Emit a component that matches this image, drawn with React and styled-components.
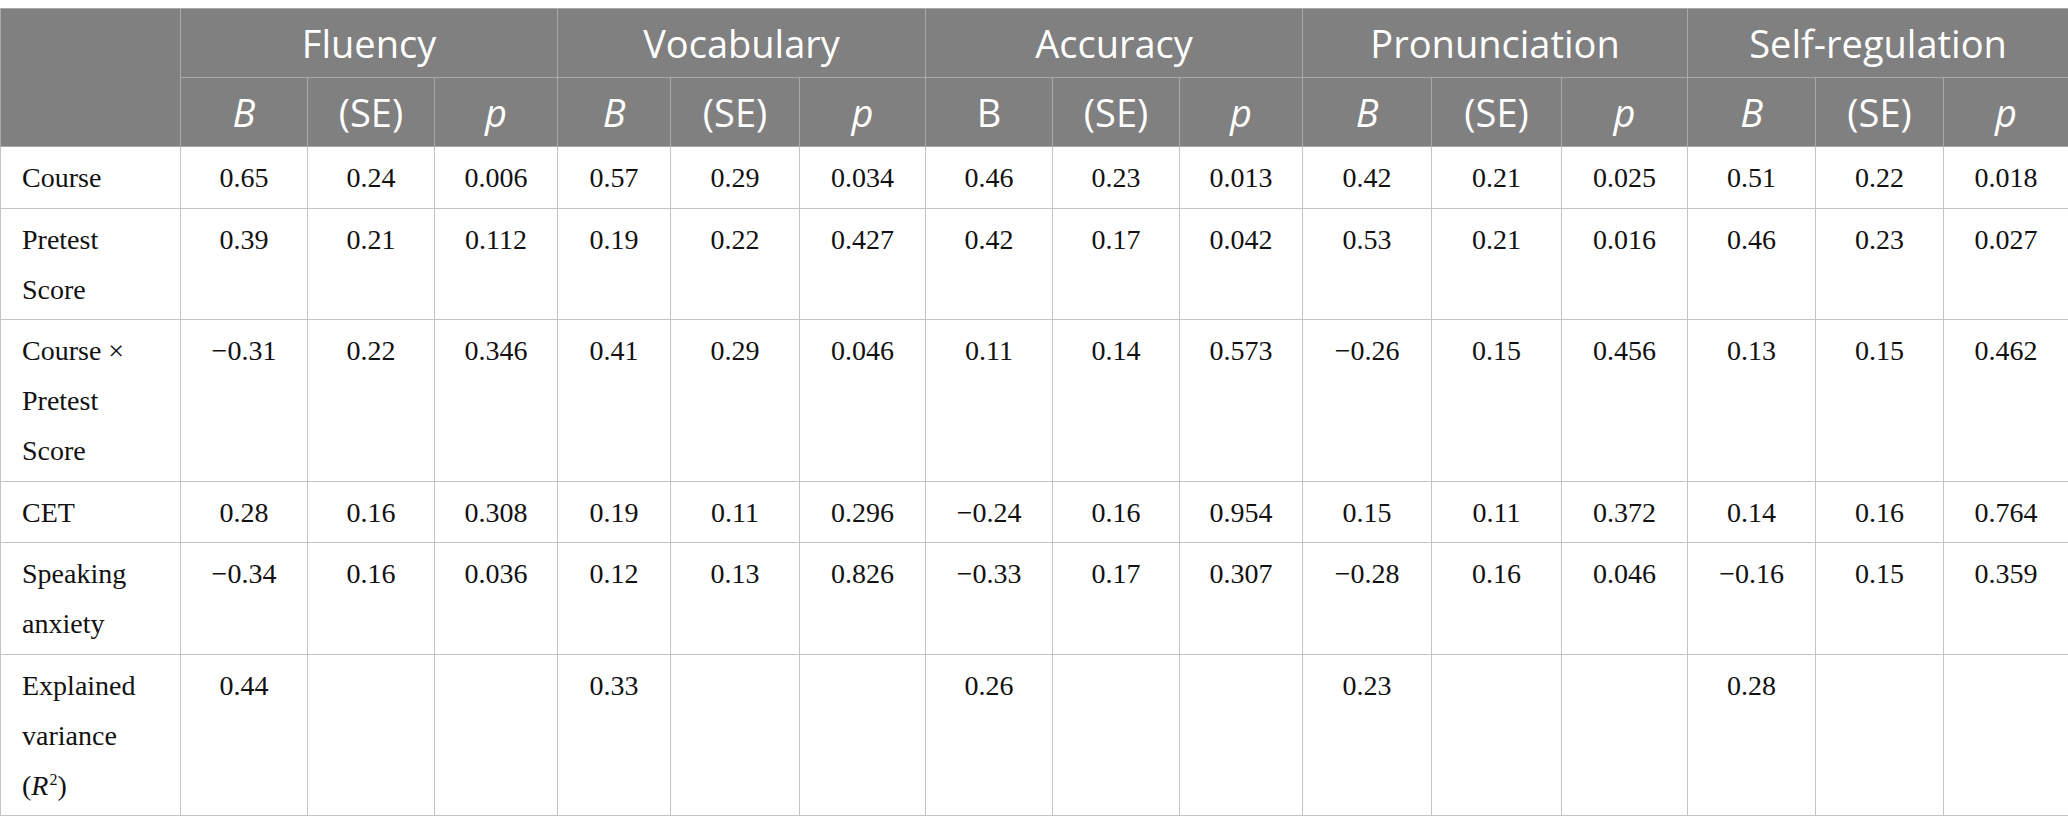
import React from 'react';
import styled, { createGlobalStyle } from 'styled-components';

const GlobalStyle = createGlobalStyle`
  html, body {
    margin: 0;
    padding: 0;
    background: #fff;
  }
`;

const Page = styled.div`
  padding-top: 8px;
  width: 2068px;
`;

const Table = styled.table`
  width: 2068px;
  table-layout: fixed;
  border-collapse: collapse;
  border-top: 1px solid #cfcfcf;
  border-bottom: 1px solid #bcbcbc;
`;

const HeadCell = styled.th`
  background: #7f807f;
  color: #fff;
  font-family: "Open Sans", "Liberation Sans", sans-serif;
  font-weight: 400;
  font-size: 38px;
  font-style: ${(p) => (p.$italic ? 'italic' : 'normal')};
  text-align: center;
  vertical-align: middle;
  height: 68px;
  padding: 0;
  border: 1px solid #a9a9a9;
`;

const Cell = styled.td`
  font-family: "Liberation Serif", "Times New Roman", serif;
  font-size: 28px;
  line-height: 50px;
  color: #111;
  text-align: ${(p) => (p.$label ? 'left' : 'center')};
  vertical-align: top;
  padding: 6px 21px 4.5px;
  border: 1px solid #c4c4c4;
  word-wrap: break-word;
`;

const Sup = styled.sup`
  font-size: 16px;
  line-height: 0;
  vertical-align: 10px;
  margin-left: 1px;
`;

const widths = [180, 127, 127, 123, 113, 129, 126, 127, 127, 123, 129, 130, 126, 128, 128, 125];

const groups = ['Fluency', 'Vocabulary', 'Accuracy', 'Pronunciation', 'Self-regulation'];

const rows = [
  { label: 'Course', vals: ['0.65', '0.24', '0.006', '0.57', '0.29', '0.034', '0.46', '0.23', '0.013', '0.42', '0.21', '0.025', '0.51', '0.22', '0.018'] },
  { label: 'Pretest Score', vals: ['0.39', '0.21', '0.112', '0.19', '0.22', '0.427', '0.42', '0.17', '0.042', '0.53', '0.21', '0.016', '0.46', '0.23', '0.027'] },
  { label: 'Course × Pretest Score', vals: ['−0.31', '0.22', '0.346', '0.41', '0.29', '0.046', '0.11', '0.14', '0.573', '−0.26', '0.15', '0.456', '0.13', '0.15', '0.462'] },
  { label: 'CET', vals: ['0.28', '0.16', '0.308', '0.19', '0.11', '0.296', '−0.24', '0.16', '0.954', '0.15', '0.11', '0.372', '0.14', '0.16', '0.764'] },
  { label: 'Speaking anxiety', vals: ['−0.34', '0.16', '0.036', '0.12', '0.13', '0.826', '−0.33', '0.17', '0.307', '−0.28', '0.16', '0.046', '−0.16', '0.15', '0.359'] },
  {
    label: (
      <>
        Explained variance (<i>R</i>
        <Sup>2</Sup>)
      </>
    ),
    vals: ['0.44', '', '', '0.33', '', '', '0.26', '', '', '0.23', '', '', '0.28', '', ''],
  },
];

const App = () => (
  <Page>
    <GlobalStyle />
    <Table>
      <colgroup>
        {widths.map((w, i) => (
          <col key={i} style={{ width: w }} />
        ))}
      </colgroup>
      <thead>
        <tr>
          <HeadCell rowSpan={2} />
          {groups.map((g) => (
            <HeadCell key={g} colSpan={3}>
              {g}
            </HeadCell>
          ))}
        </tr>
        <tr>
          {groups.map((g) => (
            <React.Fragment key={g}>
              <HeadCell $italic={g !== 'Accuracy'}>B</HeadCell>
              <HeadCell>(SE)</HeadCell>
              <HeadCell $italic>p</HeadCell>
            </React.Fragment>
          ))}
        </tr>
      </thead>
      <tbody>
        {rows.map((r, i) => (
          <tr key={i}>
            <Cell $label>{r.label}</Cell>
            {r.vals.map((v, j) => (
              <Cell key={j}>{v}</Cell>
            ))}
          </tr>
        ))}
      </tbody>
    </Table>
  </Page>
);

export default App;
